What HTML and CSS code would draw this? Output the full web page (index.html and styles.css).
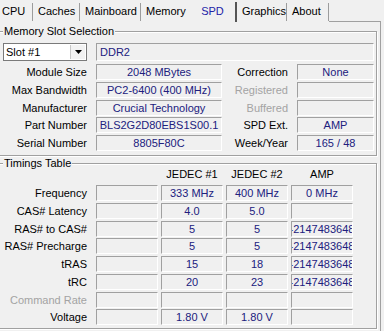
FILE: index.html
```html
<!DOCTYPE html>
<html lang="en">
<head>
    <meta charset="UTF-8">
    <title>CPU-Z SPD</title>
    <link rel="stylesheet" href="styles.css">
</head>
<body>

    <div class="window">
        <div class="tabs">
            <div class="tab">CPU</div>
            <div class="tab">Caches</div>
            <div class="tab">Mainboard</div>
            <div class="tab tab-prev">Memory</div>
            <div class="tab active">SPD</div>
            <div class="tab">Graphics</div>
            <div class="tab">About</div>
            <div class="tab-fill"></div>
        </div>

        <div class="panel">
            <!-- Memory slot selection -->
            <div class="group slot-group">
                <div class="group-title">Memory Slot Selection</div>
                <div class="slot-row">
                    <div class="select">
                        <span class="select-text">Slot #1</span>
                        <span class="select-btn">
                            <svg width="7" height="4" viewBox="0 0 7 4"><path d="M0 0h7L3.5 4z" fill="#000"/></svg>
                        </span>
                    </div>
                    <div class="field field-left">DDR2</div>
                </div>
                <div class="spd-grid">
                    <div class="label">Module Size</div>
                    <div class="field">2048 MBytes</div>
                    <div class="label">Correction</div>
                    <div class="field">None</div>

                    <div class="label">Max Bandwidth</div>
                    <div class="field">PC2-6400 (400 MHz)</div>
                    <div class="label off">Registered</div>
                    <div class="field"></div>

                    <div class="label">Manufacturer</div>
                    <div class="field">Crucial Technology</div>
                    <div class="label off">Buffered</div>
                    <div class="field"></div>

                    <div class="label">Part Number</div>
                    <div class="field">BLS2G2D80EBS1S00.1</div>
                    <div class="label">SPD Ext.</div>
                    <div class="field">AMP</div>

                    <div class="label">Serial Number</div>
                    <div class="field">8805F80C</div>
                    <div class="label">Week/Year</div>
                    <div class="field">165 / 48</div>
                </div>
            </div>

            <!-- Timings table -->
            <div class="group timings-group">
                <div class="group-title">Timings Table</div>
                <div class="timings-head">
                    <div></div>
                    <div></div>
                    <div>JEDEC #1</div>
                    <div>JEDEC #2</div>
                    <div>AMP</div>
                </div>
                <div class="timings-grid">
                    <div class="label">Frequency</div>
                    <div class="field"></div>
                    <div class="field">333 MHz</div>
                    <div class="field">400 MHz</div>
                    <div class="field">0 MHz</div>

                    <div class="label">CAS# Latency</div>
                    <div class="field"></div>
                    <div class="field">4.0</div>
                    <div class="field">5.0</div>
                    <div class="field"></div>

                    <div class="label">RAS# to CAS#</div>
                    <div class="field"></div>
                    <div class="field">5</div>
                    <div class="field">5</div>
                    <div class="field">-2147483648</div>

                    <div class="label">RAS# Precharge</div>
                    <div class="field"></div>
                    <div class="field">5</div>
                    <div class="field">5</div>
                    <div class="field">-2147483648</div>

                    <div class="label">tRAS</div>
                    <div class="field"></div>
                    <div class="field">15</div>
                    <div class="field">18</div>
                    <div class="field">-2147483648</div>

                    <div class="label">tRC</div>
                    <div class="field"></div>
                    <div class="field">20</div>
                    <div class="field">23</div>
                    <div class="field">-2147483648</div>

                    <div class="label off">Command Rate</div>
                    <div class="field"></div>
                    <div class="field"></div>
                    <div class="field"></div>
                    <div class="field"></div>

                    <div class="label">Voltage</div>
                    <div class="field"></div>
                    <div class="field">1.80 V</div>
                    <div class="field">1.80 V</div>
                    <div class="field"></div>
                </div>
            </div>
        </div>
    </div>

</body>
</html>
```

FILE: styles.css
```css
/* Reset */
* {
    box-sizing: border-box;
    margin: 0;
    padding: 0;
}

body {
    font-family: "Liberation Sans", Arial, sans-serif;
    font-size: 11px;
    color: #000;
    background-color: #f0f0f0;
}

.window {
    width: 384px;
    height: 331px;
    overflow: hidden;
}

/* Tab strip */
.tabs {
    display: grid;
    grid-template-columns: 33px 47px 61px 49px 47px 50px 42px 52px;
    height: 22px;
}

.tab {
    margin-top: 3px;
    height: 18px;
    line-height: 17px;
    padding-left: 5px;
    border-right: 1px solid #9c9c9c;
    white-space: nowrap;
}

.tab:first-child {
    padding-left: 2px;
}

.tab-prev {
    border-right: none;
}

.tab.active {
    margin-top: 2px;
    height: 20px;
    padding: 1px 0 0;
    text-align: center;
    color: #2222a8;
    border-right: 2px solid #555;
}

.tab-fill {
    border-bottom: 1px solid #a0a0a0;
}

/* Tab page */
.panel {
    margin-left: -4px;
    width: 385px;
    height: 309px;
    padding: 9px 3px 0 2px;
    border-right: 1px solid #a0a0a0;
}

/* Group boxes */
.group {
    position: relative;
    border: 1px solid #a0a0a0;
    box-shadow: 1px 1px 0 #fff, inset 1px 1px 0 #fff;
}

.group-title {
    position: absolute;
    top: -7px;
    left: 4px;
    padding: 0 1px;
    line-height: 13px;
    background-color: #f0f0f0;
}

.slot-group {
    padding: 11px 2px 4px 4px;
}

.timings-group {
    margin-top: 7px;
    padding: 3px 2px 3px 4px;
}

/* Slot selector */
.slot-row {
    display: flex;
    height: 18px;
    margin-bottom: 3px;
}

.select {
    display: flex;
    width: 84px;
    background-color: #fff;
    border: 1px solid #7a7a7a;
}

.select-text {
    flex: 1;
    padding-left: 2px;
    line-height: 16px;
}

.select-btn {
    display: flex;
    align-items: center;
    justify-content: center;
    width: 15px;
    margin: 1px;
    background-color: #f2f2f2;
    border-left: 1px solid #c8c8c8;
}

/* Read-only value boxes */
.field {
    display: flex;
    align-items: center;
    justify-content: center;
    height: 16px;
    overflow: hidden;
    white-space: nowrap;
    color: #20207e;
    background-color: #f0f0f0;
    border: 1px solid;
    border-color: #a0a0a0 #fff #fff #a0a0a0;
}

.slot-row .field {
    flex: 1;
    height: 18px;
    margin-left: 9px;
}

.field-left {
    justify-content: flex-start;
    padding-left: 3px;
}

.label {
    text-align: right;
    line-height: 16px;
    white-space: nowrap;
}

.label.off {
    color: #a3a3a3;
}

/* Module info grid */
.spd-grid {
    display: grid;
    grid-template-columns: 84px 126px 57px 77px;
    grid-auto-rows: 16px;
    column-gap: 9px;
    row-gap: 1.75px;
}

/* Timings grid */
.timings-head,
.timings-grid {
    display: grid;
    grid-template-columns: 90px repeat(4, 62px);
    column-gap: 3px;
}

.timings-head {
    height: 14px;
    line-height: 14px;
    margin-bottom: 4px;
    text-align: center;
}

.timings-grid {
    grid-auto-rows: 16px;
    row-gap: 1.75px;
}

.timings-grid .label {
    padding-right: 6px;
}
```
